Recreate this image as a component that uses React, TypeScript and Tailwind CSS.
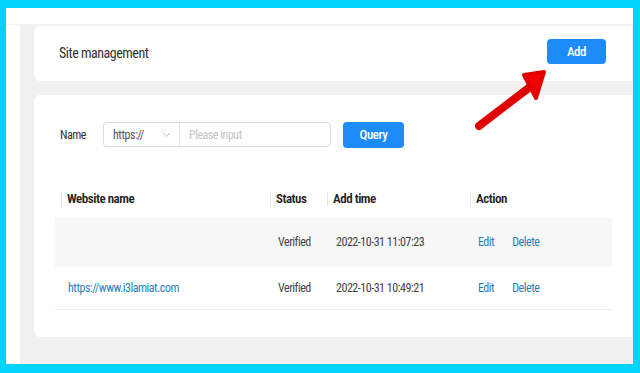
import React from "react";

const rows = [
  { name: "", status: "Verified", time: "2022-10-31 11:07:23", hover: true },
  { name: "https://www.i3lamiat.com", status: "Verified", time: "2022-10-31 10:49:21", hover: false },
];

function Arrow() {
  return (
    <svg className="absolute left-[460px] top-[60px]" width="100" height="80" viewBox="0 0 100 80">
      <line x1="19" y1="66" x2="70" y2="27" stroke="#e00000" strokeWidth="8" strokeLinecap="round" />
      <polygon points="84,12 64,15 76,38" fill="#f00000" stroke="#e00000" strokeWidth="4" strokeLinejoin="round" />
    </svg>
  );
}

export default function App() {
  return (
    <div
      className="relative w-[640px] h-[373px] bg-[#01d3fb] pt-[8px] pl-[6px] pr-[7px] pb-[9px] tracking-[-0.03em]"
      style={{ fontFamily: "'Roboto Condensed', 'Liberation Sans Narrow', 'DejaVu Sans Condensed', Roboto, sans-serif" }}
    >
      <div className="h-full bg-white flex flex-col">
        <div className="h-[17px] shrink-0 border-b border-[#f3f3f3]" />
        <div className="flex flex-1">
          <div className="w-[14px] shrink-0" />
          <div className="flex-1 bg-[#f0f0f0] pl-[14px] pt-[1px] pr-[1px] flex flex-col">
            {/* header card */}
            <div className="h-[55px] bg-white rounded-l-[6px] flex items-center justify-between pl-[25px] pr-[26px]">
              <span className="text-[14px] text-[#333]">Site management</span>
              <button className="w-[59px] h-[25px] mt-[-4px] rounded-[4px] bg-[#1d8cf8] text-white text-[13px] font-medium">
                Add
              </button>
            </div>

            {/* list card */}
            <div className="mt-[14px] h-[242px] bg-white rounded-l-[6px] pt-[27px] pl-[21px] pr-[20px]">
              <div className="flex items-center h-[25px]">
                <span className="w-[48px] pl-[5px] text-[12px] text-[#333]">Name</span>
                <div className="flex h-[25px] w-[228px] border border-[#dcdcdc] rounded-[4px]">
                  <div className="w-[76px] flex items-center justify-between pl-[9px] pr-[8px] border-r border-[#e2e2e2]">
                    <span className="text-[12px] text-[#555]">https://</span>
                    <svg width="9" height="6" viewBox="0 0 9 6">
                      <path d="M1 1 L4.5 4.5 L8 1" fill="none" stroke="#bbb" strokeWidth="1" />
                    </svg>
                  </div>
                  <div className="flex-1 flex items-center pl-[9px] text-[12px] text-[#c4c4c4]">Please input</div>
                </div>
                <button className="ml-[12px] w-[61px] h-[26px] rounded-[4px] bg-[#1d8cf8] text-white text-[13px] font-medium">
                  Query
                </button>
              </div>

              <div className="mt-[33px]">
                <div className="h-[38px] pl-[6px] grid grid-cols-[209px_57px_143px_1fr] items-center text-[13px] font-semibold text-[#222]">
                  {["Website name", "Status", "Add time", "Action"].map((h) => (
                    <span key={h} className="border-l border-[#e6e6e6] pl-[5px] leading-[14px]">
                      {h}
                    </span>
                  ))}
                </div>
                {rows.map((r, i) => (
                  <div
                    key={i}
                    className={`pl-[6px] grid grid-cols-[209px_57px_143px_1fr] items-center text-[12px] text-[#444] border-b border-[#f0f0f0] ${
                      r.hover ? "h-[48px] bg-[#f7f7f7]" : "h-[44px] bg-white"
                    }`}
                  >
                    <span className="pl-[7px] text-[#2a7fb5]">{r.name}</span>
                    <span className="pl-[8px]">{r.status}</span>
                    <span className="pl-[9px]">{r.time}</span>
                    <span className="pl-[8px] flex gap-[18px] text-[#2a7fb5]">
                      <span>Edit</span>
                      <span>Delete</span>
                    </span>
                  </div>
                ))}
              </div>
            </div>
          </div>
        </div>
      </div>
      <Arrow />
    </div>
  );
}
